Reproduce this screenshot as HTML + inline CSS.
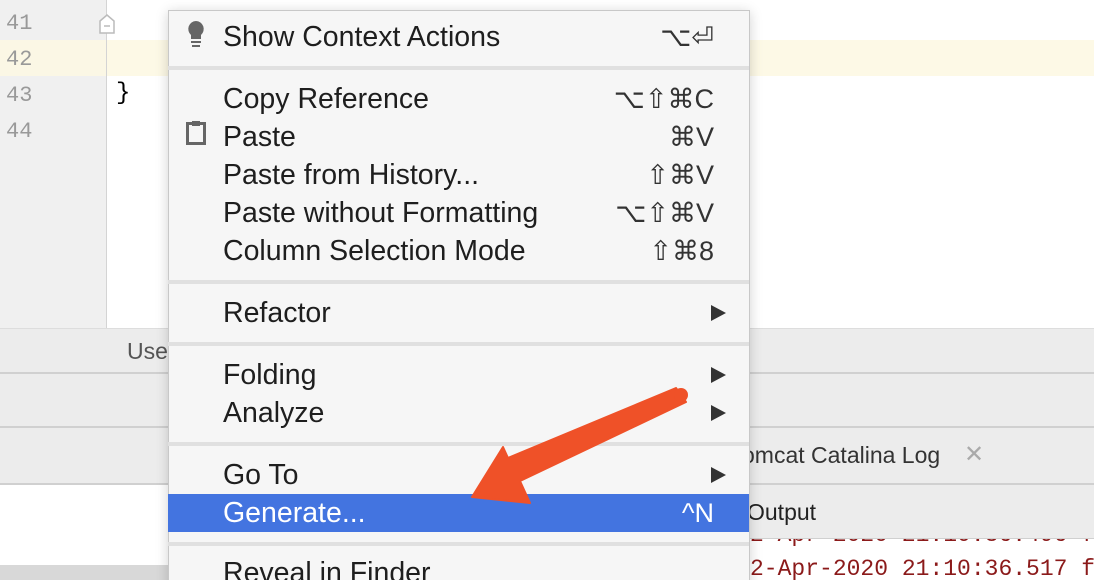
<!DOCTYPE html>
<html><head><style>
html,body{margin:0;width:1094px;height:580px;overflow:hidden}
body{position:relative;background:#fff;font-family:"Liberation Sans",sans-serif}
.a{position:absolute}
.num{position:absolute;left:6px;font-family:"Liberation Mono",monospace;font-size:22px;color:#999}
.it{position:absolute;left:223px;font-size:28.5px;color:#1e1e1e;line-height:38px;height:38px;white-space:nowrap}
.sc{position:absolute;right:380px;font-size:27px;color:#333;line-height:38px}
.tri{position:absolute;left:711px;width:0;height:0;border-left:15px solid #333;border-top:8px solid transparent;border-bottom:8px solid transparent}
.sep{position:absolute;left:168px;width:581px;height:4px;background:#e0e0e0}
</style></head><body>
<div class="a" style="left:0;top:0;width:106px;height:328px;background:#f0f0f0"></div>
<div class="a" style="left:106px;top:0;width:1px;height:328px;background:#d4d4d4"></div>
<div class="a" style="left:0;top:40px;width:106px;height:36px;background:#fbf7e5"></div>
<div class="a" style="left:107px;top:40px;width:987px;height:36px;background:#fdf9e6"></div>
<div class="num" style="top:11px">41</div>
<div class="num" style="top:47px">42</div>
<div class="num" style="top:83px">43</div>
<div class="num" style="top:119px">44</div>
<svg class="a" style="left:98px;top:13px" width="18" height="22"><path d="M2 8 L9 2 L16 8 V20 H2 Z" fill="#fff" stroke="#bbb" stroke-width="1.5"/><path d="M6 13 H12" stroke="#bbb" stroke-width="1.5"/></svg>
<div class="a" style="left:116px;top:80px;font-family:'Liberation Mono',monospace;font-size:24px">}</div>
<div class="a" style="left:750px;top:522px;font-family:'Liberation Mono',monospace;font-size:23px;color:#8b1a1a;white-space:nowrap">2-Apr-2020 21:10:36.496 f</div>
<div class="a" style="left:750px;top:556px;font-family:'Liberation Mono',monospace;font-size:23px;color:#8b1a1a;white-space:nowrap">2-Apr-2020 21:10:36.517 f</div>
<div class="a" style="left:0;top:328px;width:1094px;height:44px;background:#ececec;border-top:1px solid #ddd"></div>
<div class="a" style="left:127px;top:338px;font-size:23px;color:#555">Use</div>
<div class="a" style="left:0;top:372px;width:1094px;height:2px;background:#d0d0d0"></div>
<div class="a" style="left:0;top:374px;width:1094px;height:52px;background:#ececec"></div>
<div class="a" style="left:0;top:426px;width:1094px;height:2px;background:#d0d0d0"></div>
<div class="a" style="left:0;top:428px;width:1094px;height:55px;background:#ececec"></div>
<div class="a" style="left:0;top:483px;width:1094px;height:2px;background:#d0d0d0"></div>
<div class="a" style="left:749px;top:485px;width:345px;height:53px;background:#ececec;border-bottom:1px solid #d0d0d0"></div>
<div class="a" style="left:0;top:565px;width:168px;height:15px;background:#d8d8d8"></div>
<div class="a" style="left:742px;top:442px;font-size:23px;color:#333">omcat Catalina Log</div>
<div class="a" style="left:964px;top:440px;font-size:24px;color:#aaa">✕</div>
<div class="a" style="left:747px;top:499px;font-size:23px;color:#222">Output</div>
<div class="a" style="left:168px;top:10px;width:580px;height:580px;background:#f6f6f6;border:1px solid #c8c8c8;box-shadow:0 2px 12px rgba(0,0,0,.18)"></div>
<div class="sep" style="top:66px"></div>
<div class="sep" style="top:280px"></div>
<div class="sep" style="top:342px"></div>
<div class="sep" style="top:442px"></div>
<div class="sep" style="top:542px"></div>
<div class="a" style="left:168px;top:494px;width:581px;height:38px;background:#4374e0"></div>
<svg class="a" style="left:186px;top:20px" width="20" height="30"><path d="M10 1a8 8 0 0 0-5 14v4h10v-4a8 8 0 0 0-5-14z" fill="#666"/><rect x="5" y="21" width="10" height="2" fill="#666"/><rect x="6" y="25" width="8" height="2" fill="#666"/></svg>
<svg class="a" style="left:186px;top:120px" width="20" height="26"><rect x="1.5" y="3.5" width="17" height="20" fill="none" stroke="#666" stroke-width="3"/><rect x="6" y="1" width="8" height="5" fill="#666"/></svg>
<div class="it" style="top:18px">Show Context Actions</div><div class="sc" style="top:18px">⌥⏎</div>
<div class="it" style="top:80px">Copy Reference</div><div class="sc" style="top:80px">⌥⇧⌘C</div>
<div class="it" style="top:118px">Paste</div><div class="sc" style="top:118px">⌘V</div>
<div class="it" style="top:156px">Paste from History...</div><div class="sc" style="top:156px">⇧⌘V</div>
<div class="it" style="top:194px">Paste without Formatting</div><div class="sc" style="top:194px">⌥⇧⌘V</div>
<div class="it" style="top:232px">Column Selection Mode</div><div class="sc" style="top:232px">⇧⌘8</div>
<div class="it" style="top:294px">Refactor</div><div class="tri" style="top:305px"></div>
<div class="it" style="top:356px">Folding</div><div class="tri" style="top:367px"></div>
<div class="it" style="top:394px">Analyze</div><div class="tri" style="top:405px"></div>
<div class="it" style="top:456px">Go To</div><div class="tri" style="top:467px"></div>
<div class="it" style="top:494px;color:#fff">Generate...</div><div class="sc" style="top:494px;color:#fff">^N</div>
<div class="it" style="top:554px">Reveal in Finder</div>
<svg class="a" style="left:0;top:0" width="1094" height="580"><path d="M676 388 L508 458 L503 447 L472 497 L530 503 L520 481 L686 402 Z" fill="#ef5128" stroke="#ef5128" stroke-width="2" stroke-linejoin="round"/><circle cx="681" cy="395" r="7" fill="#ef5128"/></svg>
</body></html>
